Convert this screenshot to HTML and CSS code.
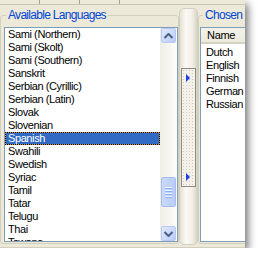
FILE: index.html
```html
<!DOCTYPE html>
<html lang="en">
<head>
    <meta charset="UTF-8">
    <title>Languages</title>
    <link rel="stylesheet" href="styles.css">
</head>
<body>
<div class="window">
    <div class="top-strip">
        <span class="cell"></span><span class="cell"></span><span class="cell"></span>
    </div>
    <div class="main">
        <div class="group group-left">
            <div class="group-title">Available Languages</div>
            <div class="listbox">
                <div class="items">
                    <div class="item">Sami (Northern)</div>
                    <div class="item">Sami (Skolt)</div>
                    <div class="item">Sami (Southern)</div>
                    <div class="item">Sanskrit</div>
                    <div class="item">Serbian (Cyrillic)</div>
                    <div class="item">Serbian (Latin)</div>
                    <div class="item">Slovak</div>
                    <div class="item">Slovenian</div>
                    <div class="item selected">Spanish</div>
                    <div class="item">Swahili</div>
                    <div class="item">Swedish</div>
                    <div class="item">Syriac</div>
                    <div class="item">Tamil</div>
                    <div class="item">Tatar</div>
                    <div class="item">Telugu</div>
                    <div class="item">Thai</div>
                    <div class="item">Tswana</div>
                </div>
                <div class="vscroll">
                    <div class="sb-btn">
                        <svg width="9" height="6" viewBox="0 0 9 6"><path d="M0.5 5 L4.5 1 L8.5 5" fill="none" stroke="#4D6185" stroke-width="2"/></svg>
                    </div>
                    <div class="sb-gap-top"></div>
                    <div class="sb-thumb">
                        <span class="grip"></span><span class="grip"></span><span class="grip"></span><span class="grip"></span>
                    </div>
                    <div class="sb-gap-bottom"></div>
                    <div class="sb-btn">
                        <svg width="9" height="6" viewBox="0 0 9 6"><path d="M0.5 1 L4.5 5 L8.5 1" fill="none" stroke="#4D6185" stroke-width="2"/></svg>
                    </div>
                </div>
            </div>
        </div>
        <div class="mover">
            <div class="mover-box">
                <span class="tri"></span>
                <span class="tri"></span>
            </div>
        </div>
        <div class="group group-right">
            <div class="group-title">Chosen Languages</div>
            <div class="listview">
                <div class="lv-header"><span class="lv-col">Name</span></div>
                <div class="lv-rows">
                    <div class="lv-row">Dutch</div>
                    <div class="lv-row">English</div>
                    <div class="lv-row">Finnish</div>
                    <div class="lv-row">German</div>
                    <div class="lv-row">Russian</div>
                </div>
            </div>
        </div>
    </div>
</div>
</body>
</html>
```

FILE: styles.css
```css
body {
    margin: 0;
    background: #fff;
    font-family: "Liberation Sans", Arial, sans-serif;
    font-size: 11px;
}
.window {
    width: 245px;
    height: 248px;
    box-sizing: border-box;
    background: #ECE9D8;
    border-bottom: 1px solid #D2CEBD;
    overflow: hidden;
    box-shadow: 3px 4px 8px rgba(0, 0, 0, 0.55);
    display: flex;
    flex-direction: column;
}
.top-strip {
    height: 4px;
    border-bottom: 1px solid #CAC6B5;
    display: flex;
    flex-shrink: 0;
}
.cell {
    width: 39px;
    height: 4px;
    border-right: 1px solid #A7A492;
}
.main {
    display: flex;
    align-items: flex-start;
    flex: 1;
}

/* group boxes */
.group {
    margin-top: 10px;
    border: 1px solid #D0D0BF;
    border-radius: 3px;
    box-sizing: border-box;
    flex-shrink: 0;
}
.group-left {
    width: 179px;
    height: 229px;
}
.group-right {
    width: 90px;
    height: 229px;
}
.group-title {
    width: fit-content;
    margin: -8px 0 0 5px;
    padding: 0 2px;
    background: #ECE9D8;
    color: #0046D5;
    font-size: 12px;
    line-height: 14px;
    letter-spacing: -0.7px;
}
.group-right .group-title {
    margin-left: 4px;
    white-space: nowrap;
}

/* left list */
.listbox {
    margin: 5px 0 0 3px;
    width: 174px;
    height: 215px;
    box-sizing: border-box;
    border: 1px solid #7F9DB9;
    background: #fff;
    display: flex;
    overflow: hidden;
}
.items {
    flex: 1;
    overflow: hidden;
}
.item {
    height: 13px;
    line-height: 13px;
    padding-left: 3px;
    letter-spacing: -0.4px;
    white-space: nowrap;
    color: #000;
}
.item.selected {
    background: #316AC5;
    color: #fff;
    box-shadow: inset 0 0 0 1px #CE953A;
    outline: 1px dotted #000;
    outline-offset: -1px;
}

/* scrollbar */
.vscroll {
    width: 17px;
    display: flex;
    flex-direction: column;
    align-items: center;
    background: linear-gradient(90deg, #EEEDE5, #FDFDFA);
}
.sb-btn {
    width: 15px;
    height: 15px;
    box-sizing: border-box;
    border: 1px solid #B7CAF5;
    border-radius: 2px;
    background: linear-gradient(135deg, #E1EAFE, #B9CBF7);
    display: flex;
    align-items: center;
    justify-content: center;
    flex-shrink: 0;
}
.sb-gap-top {
    height: 134px;
}
.sb-gap-bottom {
    flex: 1;
}
.sb-thumb {
    width: 15px;
    height: 30px;
    box-sizing: border-box;
    border: 1px solid #A9BEF0;
    border-radius: 2px;
    background: linear-gradient(90deg, #C9D8FC, #BACCF8);
    display: flex;
    flex-direction: column;
    align-items: center;
    justify-content: center;
    gap: 1px;
    flex-shrink: 0;
}
.grip {
    width: 7px;
    height: 1px;
    background: #EEF4FE;
    border-bottom: 1px solid #8CB0F8;
}

/* middle mover bar */
.mover {
    width: 19px;
    height: 237px;
    margin-top: 3px;
    box-sizing: border-box;
    border: 1px solid #D3CFBF;
    border-radius: 5px;
    background: linear-gradient(90deg, #E4E1D2, #FBFAF6 35%, #F2F0E8 70%, #D9D5C5);
    flex-shrink: 0;
}
.mover-box {
    width: 15px;
    height: 119px;
    margin: 59px 0 0 1px;
    box-sizing: border-box;
    border: 1px solid #8E8C80;
    background-color: #F3F1EA;
    background-image: radial-gradient(circle, #CFCCC0 0.7px, transparent 0.8px);
    background-size: 3px 3px;
    display: flex;
    flex-direction: column;
    justify-content: space-between;
    padding: 5px 0 5px 4px;
}
.tri {
    width: 0;
    height: 0;
    border-left: 4px solid #1A3FE6;
    border-top: 4px solid transparent;
    border-bottom: 4px solid transparent;
}

/* right list view */
.listview {
    margin: 5px 0 0 1px;
    height: 215px;
    box-sizing: border-box;
    border: 1px solid #7F9DB9;
    border-right: none;
    background: #fff;
}
.lv-header {
    height: 16px;
    box-sizing: border-box;
    background: linear-gradient(#F3F2EA, #EBEADB);
    border-bottom: 2px solid #D6D2C2;
}
.lv-col {
    display: block;
    padding-left: 6px;
    line-height: 14px;
    letter-spacing: -0.3px;
}
.lv-rows {
    padding-top: 2px;
}
.lv-row {
    height: 13px;
    line-height: 13px;
    padding-left: 5px;
    letter-spacing: -0.4px;
}
```
